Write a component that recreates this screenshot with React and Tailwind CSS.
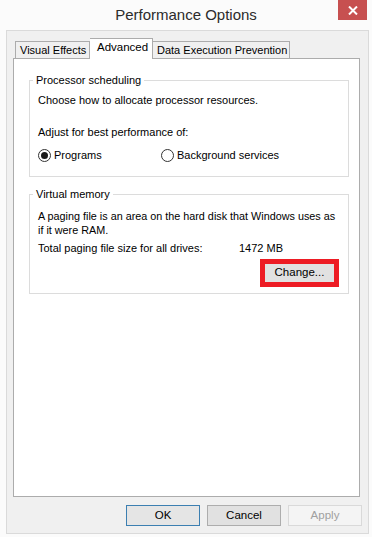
import React from 'react';

const font = { fontFamily: '"Liberation Sans", Arial, sans-serif' };

const Radio = ({ checked, label }) => (
    <label className="flex items-center gap-[3px]">
        <span className="w-[13px] h-[13px] rounded-full border border-[#333333] bg-white flex items-center justify-center">
            {checked && <span className="w-[7px] h-[7px] rounded-full bg-[#1a1a1a]" />}
        </span>
        <span>{label}</span>
    </label>
);

const Group = ({ title, className, children }) => (
    <fieldset className={`border border-[#dcdcdc] ${className}`}>
        <legend className="ml-[3px] px-[3px] leading-[15px]">{title}</legend>
        <div className="pl-[8px] pr-[2px]">{children}</div>
    </fieldset>
);

const DlgButton = ({ children, variant }) => {
    const styles = {
        primary: 'border-[#3c7fb1] bg-[#e5e5e5] text-black',
        normal: 'border-[#adadad] bg-[#e1e1e1] text-black',
        disabled: 'border-[#d9d9d9] bg-[#f4f4f4] text-[#a0a0a0]',
    };
    return (
        <button className={`w-[74px] h-[21px] border text-[11.5px] leading-none ${styles[variant]}`}>
            {children}
        </button>
    );
};

export default function App() {
    return (
        <div className="w-[372px] h-[537px] bg-[#fbfbfb] relative flex flex-col text-[11px] text-black" style={font}>
            <div className="h-[30px] flex items-center justify-center text-[15px] text-[#2b2b2b]">
                Performance Options
            </div>
            <button className="absolute top-0 right-[5px] w-[29px] h-[20px] bg-[#c75050] flex items-center justify-center">
                <svg width="10" height="9" viewBox="0 0 10 9">
                    <path d="M1 0.5 L9 8.5 M9 0.5 L1 8.5" stroke="white" strokeWidth="2" />
                </svg>
            </button>

            <div className="ml-[6px] w-[363px] h-[504px] border border-[#dadada] bg-[#f0f0f0] flex flex-col pt-[7px]">
                <div className="h-[20px] ml-[8px] flex items-end whitespace-nowrap text-[11px]">
                    <div className="w-[75px] h-[17px] border border-b-0 border-[#acacac] bg-[#f0f0f0] flex items-center pl-[4px]">
                        Visual Effects
                    </div>
                    <div className="w-[63px] h-[21px] -mb-px relative z-10 border border-l-0 border-b-0 border-[#acacac] bg-white flex items-center pl-[7px] pb-[2px] text-[11.5px]">
                        Advanced
                    </div>
                    <div className="w-[137px] h-[17px] border border-l-0 border-b-0 border-[#acacac] bg-[#f0f0f0] flex items-center pl-[4px]">
                        Data Execution Prevention
                    </div>
                </div>

                <div className="ml-[6px] w-[347px] h-[439px] border border-[#acacac] bg-white pt-[14px] pl-[15px]">
                    <Group title="Processor scheduling" className="w-[320px] h-[104px]">
                        <div className="leading-[15px] mt-[5px]">Choose how to allocate processor resources.</div>
                        <div className="leading-[15px] mt-[17px]">Adjust for best performance of:</div>
                        <div className="flex mt-[8px] leading-[15px]">
                            <div className="w-[123px]"><Radio checked label="Programs" /></div>
                            <Radio label="Background services" />
                        </div>
                    </Group>

                    <Group title="Virtual memory" className="w-[320px] h-[107px] mt-[10px]">
                        <div className="leading-[14px] mt-[7px] whitespace-nowrap text-[10.8px]">
                            A paging file is an area on the hard disk that Windows uses as
                            <br />
                            if it were RAM.
                        </div>
                        <div className="flex leading-[15px] mt-[4px]">
                            <span className="w-[201px]">Total paging file size for all drives:</span>
                            <span>1472 MB</span>
                        </div>
                        <div className="flex justify-end mt-[3px] pr-[7px]">
                            <div className="border-[5px] border-[#ed1c24]">
                                <button className="w-[69px] h-[18px] bg-[#e1e1e1] text-[11.5px] leading-none">Change...</button>
                            </div>
                        </div>
                    </Group>
                </div>

                <div className="flex justify-end gap-[7px] pr-[6px] mt-[8px]">
                    <DlgButton variant="primary">OK</DlgButton>
                    <DlgButton variant="normal">Cancel</DlgButton>
                    <DlgButton variant="disabled">Apply</DlgButton>
                </div>
            </div>
        </div>
    );
}
